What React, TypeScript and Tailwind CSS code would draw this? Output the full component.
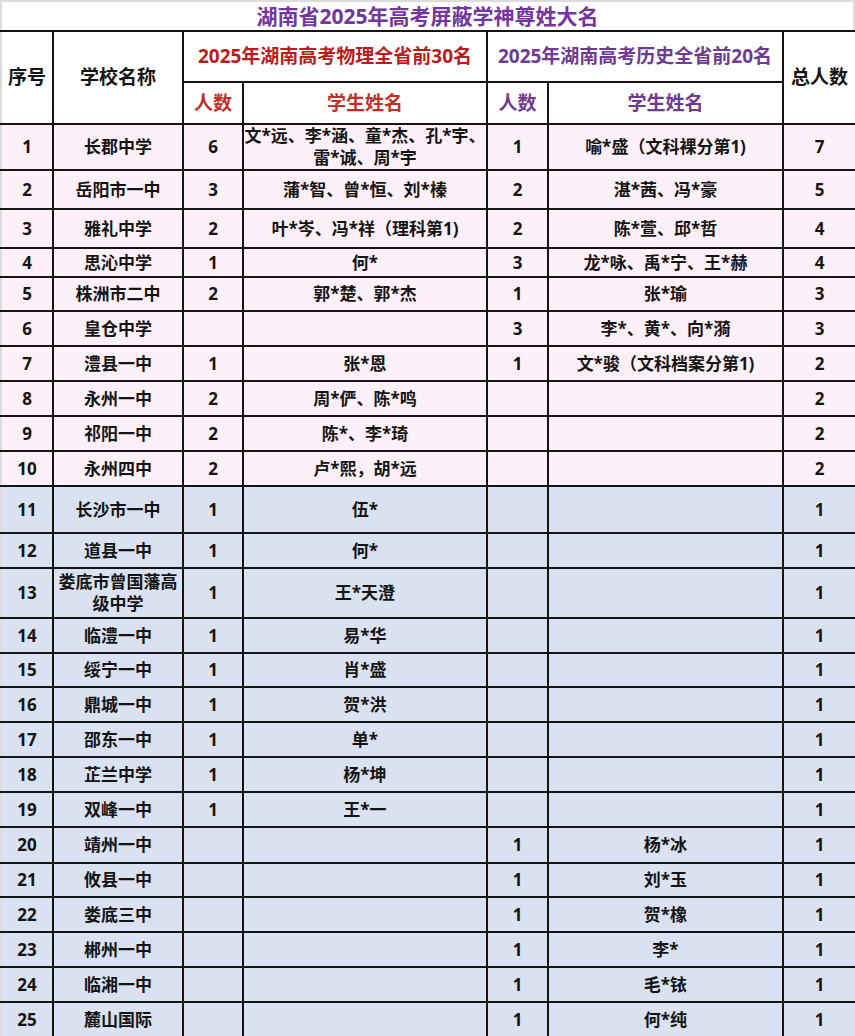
import React from 'react'

type Row = {
  no: number
  school: string
  pCount: string
  pNames: React.ReactNode
  hCount: string
  hNames: string
  total: number
  h: string
}

const rows: Row[] = [
  { no: 1, school: '长郡中学', pCount: '6', pNames: <>文*远、李*涵、童*杰、孔*宇、<br />雷*诚、周*宇</>, hCount: '1', hNames: '喻*盛（文科裸分第1)', total: 7, h: 'h-[46px]' },
  { no: 2, school: '岳阳市一中', pCount: '3', pNames: '蒲*智、曾*恒、刘*榛', hCount: '2', hNames: '湛*茜、冯*豪', total: 5, h: 'h-[39px]' },
  { no: 3, school: '雅礼中学', pCount: '2', pNames: '叶*岑、冯*祥（理科第1)', hCount: '2', hNames: '陈*萱、邱*哲', total: 4, h: 'h-[39px]' },
  { no: 4, school: '思沁中学', pCount: '1', pNames: '何*', hCount: '3', hNames: '龙*咏、禹*宁、王*赫', total: 4, h: 'h-[29px]' },
  { no: 5, school: '株洲市二中', pCount: '2', pNames: '郭*楚、郭*杰', hCount: '1', hNames: '张*瑜', total: 3, h: 'h-[34px]' },
  { no: 6, school: '皇仓中学', pCount: '', pNames: '', hCount: '3', hNames: '李*、黄*、向*漪', total: 3, h: 'h-[35px]' },
  { no: 7, school: '澧县一中', pCount: '1', pNames: '张*恩', hCount: '1', hNames: '文*骏（文科档案分第1)', total: 2, h: 'h-[35px]' },
  { no: 8, school: '永州一中', pCount: '2', pNames: '周*俨、陈*鸣', hCount: '', hNames: '', total: 2, h: 'h-[35px]' },
  { no: 9, school: '祁阳一中', pCount: '2', pNames: '陈*、李*琦', hCount: '', hNames: '', total: 2, h: 'h-[35px]' },
  { no: 10, school: '永州四中', pCount: '2', pNames: '卢*熙，胡*远', hCount: '', hNames: '', total: 2, h: 'h-[35px]' },
  { no: 11, school: '长沙市一中', pCount: '1', pNames: '伍*', hCount: '', hNames: '', total: 1, h: 'h-[47px]' },
  { no: 12, school: '道县一中', pCount: '1', pNames: '何*', hCount: '', hNames: '', total: 1, h: 'h-[35px]' },
  { no: 13, school: '娄底市曾国藩高级中学', pCount: '1', pNames: '王*天澄', hCount: '', hNames: '', total: 1, h: 'h-[50px]' },
  { no: 14, school: '临澧一中', pCount: '1', pNames: '易*华', hCount: '', hNames: '', total: 1, h: 'h-[35px]' },
  { no: 15, school: '绥宁一中', pCount: '1', pNames: '肖*盛', hCount: '', hNames: '', total: 1, h: 'h-[34px]' },
  { no: 16, school: '鼎城一中', pCount: '1', pNames: '贺*洪', hCount: '', hNames: '', total: 1, h: 'h-[35px]' },
  { no: 17, school: '邵东一中', pCount: '1', pNames: '单*', hCount: '', hNames: '', total: 1, h: 'h-[35px]' },
  { no: 18, school: '芷兰中学', pCount: '1', pNames: '杨*坤', hCount: '', hNames: '', total: 1, h: 'h-[35px]' },
  { no: 19, school: '双峰一中', pCount: '1', pNames: '王*一', hCount: '', hNames: '', total: 1, h: 'h-[35px]' },
  { no: 20, school: '靖州一中', pCount: '', pNames: '', hCount: '1', hNames: '杨*冰', total: 1, h: 'h-[36px]' },
  { no: 21, school: '攸县一中', pCount: '', pNames: '', hCount: '1', hNames: '刘*玉', total: 1, h: 'h-[34px]' },
  { no: 22, school: '娄底三中', pCount: '', pNames: '', hCount: '1', hNames: '贺*橡', total: 1, h: 'h-[35px]' },
  { no: 23, school: '郴州一中', pCount: '', pNames: '', hCount: '1', hNames: '李*', total: 1, h: 'h-[35px]' },
  { no: 24, school: '临湘一中', pCount: '', pNames: '', hCount: '1', hNames: '毛*铱', total: 1, h: 'h-[35px]' },
  { no: 25, school: '麓山国际', pCount: '', pNames: '', hCount: '1', hNames: '何*纯', total: 1, h: 'h-[35px]' },
]

const cell = 'border-2 border-[#141414] p-0 text-center align-middle'

export default function App() {
  return (
    <div className="w-[855px] bg-white font-['Open_Sans','Noto_Sans_CJK_SC',sans-serif] font-bold text-[#141414]">
      {/* 标题 */}
      <div className="h-[30px] border-t-2 border-x-2 border-[#dcdcdc] flex items-center justify-center text-[21px] leading-none text-[#7335a0]">
        湖南省2025年高考屏蔽学神尊姓大名
      </div>

      <table className="w-[855px] table-fixed border-collapse">
        <colgroup>
          <col className="w-[52px]" />
          <col className="w-[130px]" />
          <col className="w-[60px]" />
          <col className="w-[244px]" />
          <col className="w-[61px]" />
          <col className="w-[235px]" />
          <col className="w-[73px]" />
        </colgroup>
        <thead>
          <tr className="h-[51px]">
            <th rowSpan={2} className={`${cell} border-l-[#dcdcdc] text-[19px]`}>序号</th>
            <th rowSpan={2} className={`${cell} text-[19px]`}>学校名称</th>
            <th colSpan={2} className={`${cell} text-[19px] text-[#b81c1c]`}>2025年湖南高考物理全省前30名</th>
            <th colSpan={2} className={`${cell} text-[19px] text-[#6e3a92]`}>2025年湖南高考历史全省前20名</th>
            <th rowSpan={2} className={`${cell} text-[19px]`}>总人数</th>
          </tr>
          <tr className="h-[42px]">
            <th className={`${cell} text-[19px] text-[#c0302a]`}>人数</th>
            <th className={`${cell} text-[19px] text-[#c0302a]`}>学生姓名</th>
            <th className={`${cell} text-[19px] text-[#6e3a92]`}>人数</th>
            <th className={`${cell} text-[19px] text-[#6e3a92]`}>学生姓名</th>
          </tr>
        </thead>
        <tbody className="text-[17px] leading-[22px]">
          {rows.map((r) => (
            <tr key={r.no} className={`${r.h} ${r.no <= 10 ? 'bg-[#fdf0f8]' : 'bg-[#dae1f1]'}`}>
              <td className={`${cell} border-l-[#dcdcdc]`}>{r.no}</td>
              <td className={`${cell} px-1`}>{r.school}</td>
              <td className={cell}>{r.pCount}</td>
              <td className={cell}>{r.pNames}</td>
              <td className={cell}>{r.hCount}</td>
              <td className={cell}>{r.hNames}</td>
              <td className={cell}>{r.total}</td>
            </tr>
          ))}
        </tbody>
      </table>
    </div>
  )
}
